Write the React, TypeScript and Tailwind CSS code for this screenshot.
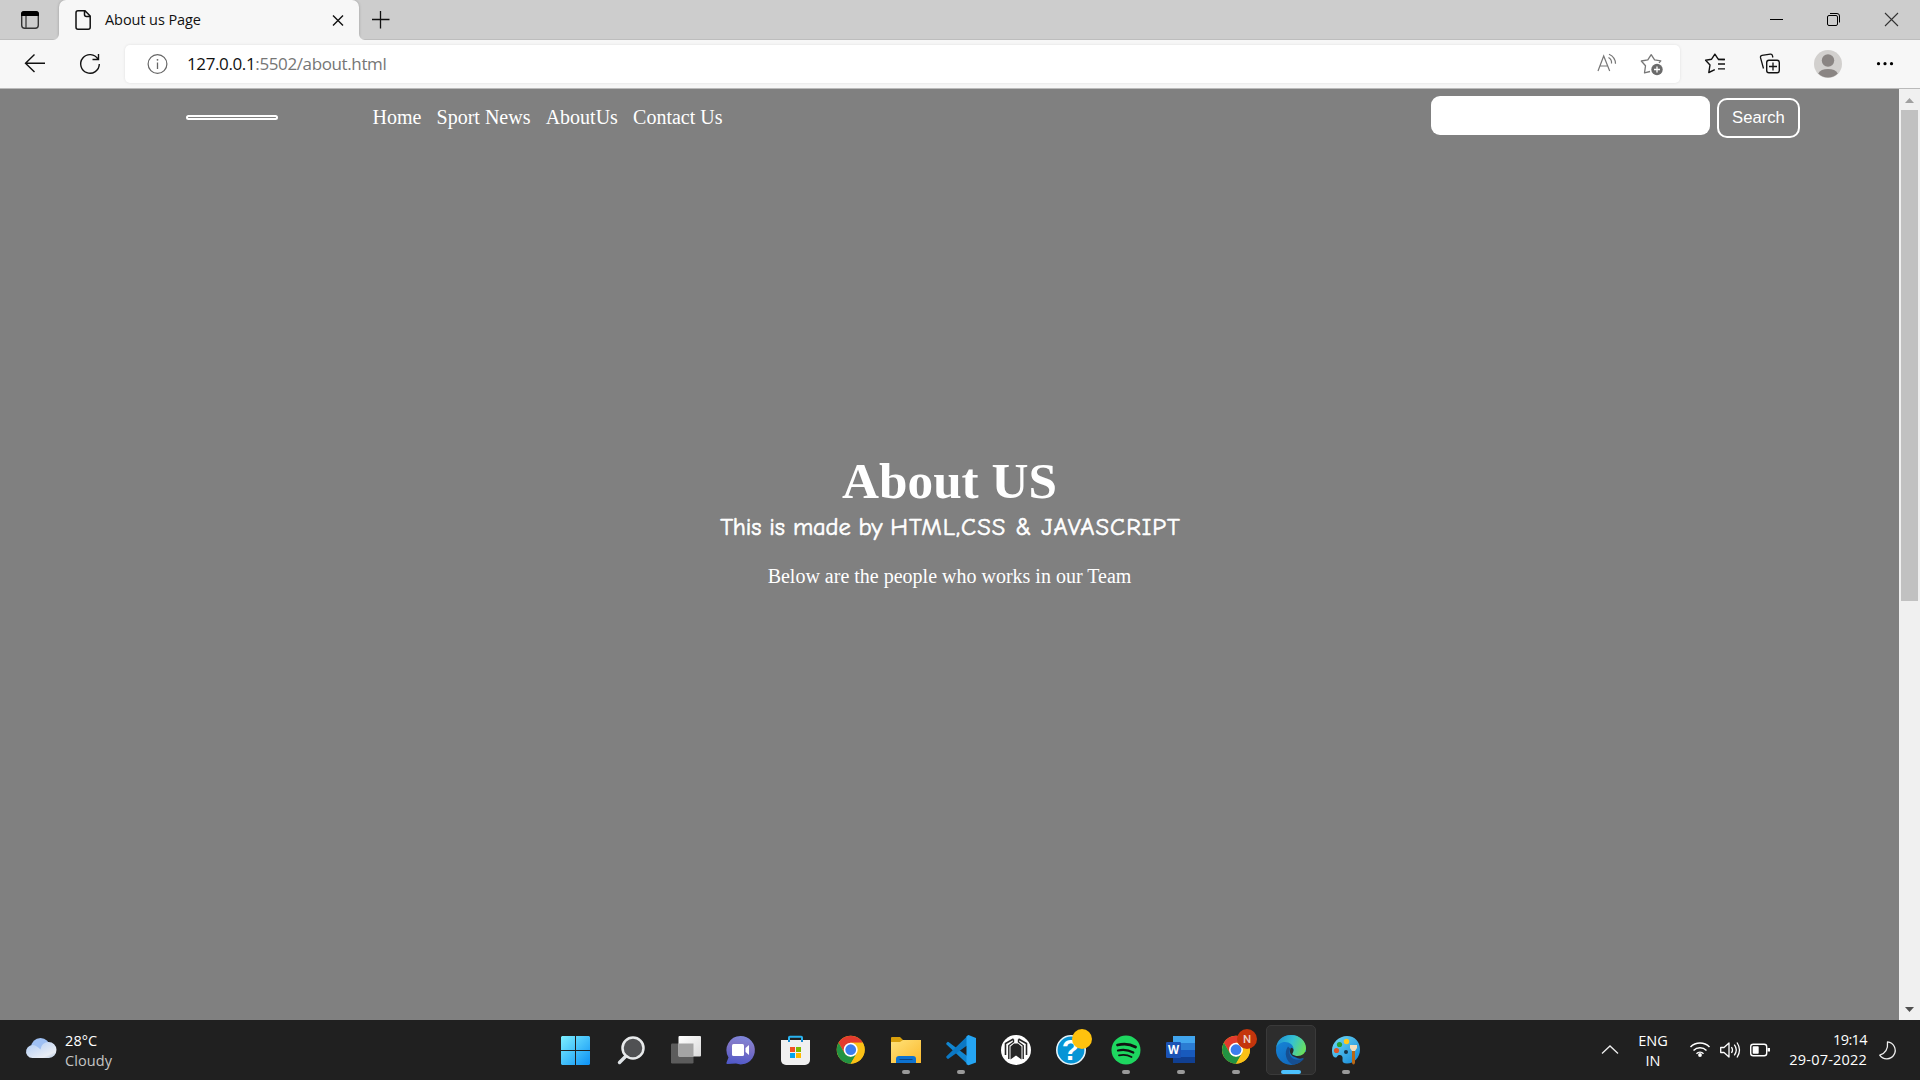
import type { ReactNode } from "react";

type IconProps = { box: string; className: string; children: ReactNode };

function Icon({ box, className, children }: IconProps) {
  return (
    <svg viewBox={box} className={`shrink-0 ${className}`} fill="none">
      {children}
    </svg>
  );
}

function TabStrip() {
  return (
    <div className="flex h-10 shrink-0 items-stretch border-b border-[#bdbdbd] bg-[#cdcdcd]">
      <Icon box="0 0 59 39" className="h-[39px] w-[59px]">
        <rect x="21.7" y="11.7" width="16.6" height="16.6" rx="3" stroke="#333" strokeWidth="1.4" />
        <path d="M21 16v-2a3 3 0 0 1 3-3h12a3 3 0 0 1 3 3v2z" fill="#000" />
        <path d="M26 16v12" stroke="#444" strokeWidth="1.4" />
      </Icon>
      <div className="relative flex h-10 w-[300px] shrink-0 items-center rounded-t-[7px] bg-[#f7f7f7] shadow-[0_0_3px_rgba(0,0,0,0.25)] [clip-path:inset(0_-8px_0_-8px)]">
        <svg viewBox="0 0 6 6" className="absolute bottom-0 -left-1.5 size-1.5"><path d="M6 0v6H0a6 6 0 0 0 6-6z" fill="#f7f7f7" /></svg>
        <svg viewBox="0 0 6 6" className="absolute -right-1.5 bottom-0 size-1.5"><path d="M0 0v6h6a6 6 0 0 1-6-6z" fill="#f7f7f7" /></svg>
        <Icon box="59 0 46 40" className="h-10 w-[46px]">
          <path d="M78 10.8h7l5.2 5.2v11.2a2 2 0 0 1-2 2H78a2 2 0 0 1-2-2V12.800a2 2 0 0 1 2-2zM84.500 11v3.500a2 2 0 0 0 2 2H90" stroke="#111" strokeWidth="1.5" />
        </Icon>
        <span className="w-[217px] text-[14.500px] tracking-[-0.08px] whitespace-nowrap text-[#111]">About us Page</span>
        <Icon box="322 0 32 40" className="h-10 w-8">
          <path d="M333 15.500l10 10M343 15.500l-10 10" stroke="#111" strokeWidth="1.4" />
        </Icon>
      </div>
      <Icon box="359 0 43 39" className="h-[39px] w-[43px]">
        <path d="M372 19.500h17.500M380.500 11v17.500" stroke="#111" strokeWidth="1.3" />
      </Icon>
      <Icon box="1740 0 180 39" className="ml-auto h-[39px] w-[180px]">
        <path d="M1770 19.500h13" stroke="#000" />
        <rect x="1827.500" y="15.500" width="10" height="10" rx="1.5" stroke="#000" />
        <path d="M1830 13.500h7a2.500 2.500 0 0 1 2.500 2.500v6.500" stroke="#000" />
        <path d="M1885 13l13 13M1898 13l-13 13" stroke="#333" strokeWidth="1.1" />
      </Icon>
    </div>
  );
}

function Toolbar() {
  return (
    <div className="flex h-[49px] shrink-0 items-center border-b border-[#bababa] bg-[#f7f7f7]">
      <Icon box="0 40 125 48" className="h-12 w-[125px]">
        <path d="M45 63.300H25.500M34.500 54.500l-9 8.800 9 8.800" stroke="#111" strokeWidth="1.4" />
        <path d="M98 59.200A9.300 9.300 0 1 0 99.300 64M98.500 54v5.500h-6" stroke="#111" strokeWidth="1.4" />
      </Icon>
      <div className="flex h-[38px] w-[1555px] shrink-0 items-center rounded-[5px] bg-white shadow-[0_0_3px_rgba(0,0,0,0.1)]">
        <Icon box="125 45 62 38" className="h-[38px] w-[62px]">
          <circle cx="157.500" cy="64" r="9.400" stroke="#666" strokeWidth="1.2" />
          <path d="M157.500 62.500v6.500" stroke="#666" strokeWidth="1.3" />
          <circle cx="157.500" cy="59.800" r="0.9" fill="#666" />
        </Icon>
        <span className="pb-px text-[17px] tracking-[-0.380px] whitespace-nowrap text-[#111]">
          127.0.0.1<span className="text-[#767676]">:5502/about.html</span>
        </span>
        <Icon box="1580 45 100 38" className="ml-auto h-[38px] w-[100px]">
          <path d="M1598 71l5.700-15 6 15M1600 66h7.800M1608.500 57.500a6 6 0 0 1 3 6M1609 54.300q6.500 3 6.500 9.500" stroke="#777" strokeWidth="1.2" />
          <path d="M1650 71.500l-5.500 1.300 1-7-4.200-4.800 6.500-1.100 3.400-5.200 3.400 5.200 6.200 1-1.800 2" stroke="#777" strokeWidth="1.3" strokeLinejoin="round" />
          <circle cx="1657" cy="69.500" r="5.700" fill="#6b6b6b" />
          <path d="M1654 69.500h6M1657 66.500v6" stroke="#fff" strokeWidth="1.3" />
        </Icon>
      </div>
      <Icon box="1680 40 240 48" className="h-12 w-60">
        <path d="M1724.500 59.500l-6.300-.300-3.300-5-3.300 5-6 1 4.400 4.800-1.200 7.500 6-2.800" stroke="#111" strokeWidth="1.4" strokeLinejoin="round" />
        <path d="M1718 59.500h7M1718 64h7M1718 68.800h7" stroke="#111" strokeWidth="1.3" />
        <path d="M1763.500 68.500l-3-10.800a2 2 0 0 1 1.500-2.300l8.300-1.200a2 2 0 0 1 2.200 1.600l.400 1.700" stroke="#111" strokeWidth="1.3" />
        <rect x="1766.700" y="60.200" width="12.600" height="12.600" rx="2.200" stroke="#111" strokeWidth="1.4" />
        <path d="M1769 66.500h8M1773 62.500v8" stroke="#111" strokeWidth="1.3" />
        <circle cx="1828" cy="64" r="14" fill="#d2d0ce" />
        <circle cx="1828" cy="60.500" r="6.200" fill="#8a8583" />
        <path d="M1818.200 73.500a10.500 7 0 0 1 19.600 0 14 14 0 0 1-19.600 0z" fill="#8a8583" />
        <g fill="#000"><circle cx="1878.500" cy="63.700" r="1.600" /><circle cx="1885" cy="63.700" r="1.600" /><circle cx="1891.500" cy="63.700" r="1.600" /></g>
      </Icon>
    </div>
  );
}

function PageContent() {
  return (
    <main className="flex flex-1 flex-col bg-[#808080] font-['Liberation_Serif','Times_New_Roman',serif] text-white">
      <nav className="flex h-[60px] shrink-0 items-start pl-[186px] text-xl">
        <div className="mt-[26px] h-[5px] w-[92px] rounded-[3px] border-2 border-white" />
        <ul className="mt-[14px] ml-[94.500px] flex gap-[15.200px] leading-7 whitespace-nowrap">
          <li>Home</li>
          <li>Sport News</li>
          <li>AboutUs</li>
          <li>Contact Us</li>
        </ul>
        <input aria-label="Search" className="mt-[7px] ml-auto h-[39px] w-[279px] rounded-[9px] bg-white" />
        <button className="mt-[9px] mr-[99px] ml-[7px] h-10 w-[83px] rounded-[10px] border-2 border-white font-['Liberation_Sans',Arial,sans-serif] text-[16.670px]">Search</button>
      </nav>
      <section className="flex flex-col items-center pt-[303px] whitespace-nowrap">
        <h1 className="text-[51.200px] leading-[58px] font-bold">About US</h1>
        <p className="pl-0.5 font-['Comic_Sans_MS','Comic_Neue',cursive] text-[24.500px] leading-[34px] tracking-[-0.130px] [-webkit-text-stroke:0.6px_white]">This is made by <span className="tracking-[1px]">HTML,CSS &amp; JAVASCRIPT</span></p>
        <p className="mt-[18px] text-xl leading-7">Below are the people who works in our Team</p>
      </section>
    </main>
  );
}

function Scrollbar() {
  return (
    <div className="flex w-[21px] shrink-0 flex-col bg-[#f0f0f0]">
      <Icon box="1899 89 21 21" className="h-[21px] w-[21px]"><path d="M1905 103l4.500-5 4.500 5z" fill="#a0a0a0" /></Icon>
      <div className="ml-0.5 h-[491px] w-[17px] bg-[#c1c1c1]" />
      <Icon box="1899 999 21 21" className="mt-auto h-[21px] w-[21px]"><path d="M1905 1007l4.500 5 4.500-5z" fill="#505050" /></Icon>
    </div>
  );
}

function ChromeLogo({ cx, cy }: { cx: number; cy: number }) {
  return (
    <g transform={`translate(${cx} ${cy})`}>
      <circle r="14" fill="#fbc116" />
      <path d="M-12.120-7A14 14 0 0 1 12.120-7L0-7-6.060 3.500z" fill="#e33b2e" />
      <path d="M-12.120-7A14 14 0 0 0 0 14L6.060 3.500 0 7-6.060 3.500z" fill="#229342" />
      <path d="M0-7H12.120A14 14 0 0 1 0 14L6.060 3.500z" fill="#fbc116" />
      <circle r="7" fill="#fff" />
      <circle r="5.400" fill="#3b7ded" />
    </g>
  );
}

const apps: { name: string; state?: "open" | "active"; art: ReactNode }[] = [
  { name: "Start", art: (
    <><defs><linearGradient id="start" x1="561" y1="1036" x2="590" y2="1065" gradientUnits="userSpaceOnUse"><stop stopColor="#7df0ff" /><stop offset="1" stopColor="#0c91f5" /></linearGradient></defs>
    <path d="M562 1036h13v14h-14v-13zM576 1036h13l1 1v13h-14zM561 1051h14v14h-13l-1-1zM576 1051h14v13l-1 1h-13z" fill="url(#start)" /></>
  ) },
  { name: "Search", art: (
    <><path d="M626 1056l-6.500 6.500" stroke="#dfe3e6" strokeWidth="3.400" strokeLinecap="round" /><circle cx="633" cy="1048" r="10.500" fill="#505153" stroke="#e8eaeb" strokeWidth="2.500" /></>
  ) },
  { name: "Task view", art: (
    <><defs><linearGradient id="tv" x1="0" y1="0" x2="1" y2="1"><stop stopColor="#fff" /><stop offset="1" stopColor="#dadada" /></linearGradient></defs>
    <rect x="671" y="1043.500" width="22.500" height="20" rx="1.200" fill="#5c5c5c" /><rect x="678.500" y="1036" width="22.500" height="20.500" rx="1" fill="url(#tv)" /><path d="M678.500 1043.500h15v13h-15z" fill="#a4a4a4" /></>
  ) },
  { name: "Chat", art: (
    <><defs><linearGradient id="chat" x1="0.600" y1="0" x2="0.400" y2="1"><stop stopColor="#7e87dc" /><stop offset="0.350" stopColor="#8075c6" /><stop offset="1" stopColor="#5059c9" /></linearGradient></defs>
    <path d="M740.500 1036a14.200 14.200 0 1 1-4.500 27.600l-8.500.400q-1.500 0-1-1.500l2-5a14.200 14.200 0 0 1 12-21.500z" fill="url(#chat)" /><rect x="732" y="1044" width="12" height="12" rx="1.500" fill="#fff" /><path d="M745.500 1048l3.500-3v10l-3.500-3z" fill="#fff" /></>
  ) },
  { name: "Store", art: (
    <><path d="M789 1042v-4.500q0-.8.800-.8h11.400q.8 0 .8.800v4.500" stroke="#28b3f0" strokeWidth="2" /><path d="M781 1040h29v20a5 5 0 0 1-5 5h-19a5 5 0 0 1-5-5z" fill="#f0f0f0" /><path d="M789 1040v2M802 1040v2" stroke="#178ad0" strokeWidth="2" />
    <path d="M790 1047h5v5h-5z" fill="#f25022" /><path d="M796 1047h5v5h-5z" fill="#7fba00" /><path d="M790 1053h5v5h-5z" fill="#00a4ef" /><path d="M796 1053h5v5h-5z" fill="#ffb900" /></>
  ) },
  { name: "Chrome", art: <ChromeLogo cx={850.700} cy={1049.700} /> },
  { name: "Explorer", state: "open", art: (
    <><defs><linearGradient id="folder" x1="0" y1="0" x2="1" y2="1"><stop stopColor="#ffe27a" /><stop offset="1" stopColor="#fbb92c" /></linearGradient></defs>
    <path d="M891 1038q0-1 1-1h8l3 3v5h-12z" fill="#d9a00c" /><path d="M891 1042h9l3-2h18v23h-30z" fill="url(#folder)" /><path d="M896 1063v-4a3 3 0 0 1 3-3h14a3 3 0 0 1 3 3v4z" fill="#0d72d0" /><path d="M899.500 1059.500h13" stroke="#0a4585" /></>
  ) },
  { name: "VS Code", state: "open", art: (
    <><path d="M948.500 1042l20 15v8l-22-20.500q-.7-.8 0-1.600l1-1q.5-.4 1 .1z" fill="#1186d0" /><path d="M968.500 1035v9.500l-20 14.300q-.5.400-1 0l-1-1q-.7-.8 0-1.500z" fill="#0b78c4" /><path d="M968.500 1035l7.500 3v24.500l-7.500 2.700-2-1v-28z" fill="#25a5f3" /></>
  ) },
  { name: "Headset", art: (
    <><circle cx="1016" cy="1050" r="15" fill="#fff" />
    <path d="M1005.500 1055v-11.500l8-4.500M1026.500 1055v-11.500l-8-4.500" stroke="#252525" strokeWidth="1.600" />
    <path d="M1008.800 1059v-13.500l4.700-3.500v-2.500M1023.200 1059v-13.500l-4.700-3.500v-2.500" stroke="#252525" strokeWidth="1.400" />
    <path d="M1010.500 1059.500v-13l3.500-3h4l3.500 3v13l-5.500-4z" fill="#252525" /></>
  ) },
  { name: "Help", art: (
    <><circle cx="1071" cy="1050" r="14.200" fill="#0795d6" stroke="#e7f4fa" strokeWidth="1.600" /><text x="1070.500" y="1059.700" textAnchor="middle" fontFamily="Liberation Sans" fontWeight="700" fontSize="29" fill="#fff">?</text><circle cx="1082" cy="1039" r="10" fill="#ffc20e" /></>
  ) },
  { name: "Spotify", state: "open", art: (
    <><circle cx="1126" cy="1050" r="14.500" fill="#1ed760" /><path d="M1117.500 1045q10-2.500 18 2" stroke="#111" strokeWidth="2.800" strokeLinecap="round" /><path d="M1118 1050.500q8-2 15.300 2" stroke="#111" strokeWidth="2.200" strokeLinecap="round" /><path d="M1119 1055.300q7-1.500 12.500 1.700" stroke="#111" strokeWidth="1.800" strokeLinecap="round" /></>
  ) },
  { name: "Word", state: "open", art: (
    <><path d="M1173 1036h22v7h-22z" fill="#41a5ee" /><path d="M1173 1043h22v7h-22z" fill="#2b7cd3" /><path d="M1173 1050h22v7h-22z" fill="#185abd" /><path d="M1173 1057h22v6h-22z" fill="#103f91" /><rect x="1166" y="1042" width="15" height="16" rx="1.200" fill="#1b53b5" /><text x="1173.500" y="1054.200" textAnchor="middle" fontFamily="Open Sans" fontWeight="700" fontSize="11.500" fill="#fff">W</text></>
  ) },
  { name: "Chrome profile", state: "open", art: (
    <><ChromeLogo cx={1236} cy={1049.700} /><circle cx="1247" cy="1039" r="10" fill="#c4350c" /><text x="1247" y="1043.300" textAnchor="middle" fontFamily="Roboto" fontWeight="500" fontSize="11.500" fill="#ead0c6">N</text></>
  ) },
  { name: "Edge", state: "active", art: (
    <><defs><linearGradient id="edgeTop" x1="0" y1="0.300" x2="1" y2="0.600"><stop stopColor="#1f93d5" /><stop offset="0.500" stopColor="#35c1d2" /><stop offset="1" stopColor="#6be15a" /></linearGradient><linearGradient id="edgeLow" x1="0" y1="0" x2="0.700" y2="1"><stop stopColor="#1689dc" /><stop offset="1" stopColor="#1166ba" /></linearGradient></defs>
    <circle cx="1291" cy="1050" r="15" fill="url(#edgeLow)" />
    <path d="M1293 1052h16v3.500l-5.500 2.500q-8 3-10.500-6z" fill="#2d2d2d" />
    <path d="M1276 1048C1277 1040 1283 1035 1291 1035c9 0 15 6.500 15 13 0 5-4 8-8.500 8-3.500 0-6-1.500-6-2.500 0-.8 2-1.500 2-4.500 0-4-4-7-8.500-7-4 0-7.500 2.500-9 6z" fill="url(#edgeTop)" /><path d="M1288 1046.500c-4.500 6-2 15.500 5 18.300 4.500-.5 9-3 11-6.300-5 2.500-12 1.500-14-3.500-1-2.500-.5-4.500.5-6z" fill="#164f91" /><path d="M1291 1047.800c-2 3-1 7 2.500 8.800 4 1.700 7.500 1.300 9.500.2-3 .2-8-.2-10.500-2.300-.8-.8 1-1.500 1-4.500 0-1-.8-2-2.500-2.200z" fill="#292929" /></>
  ) },
  { name: "Paint", state: "open", art: (
    <><defs><linearGradient id="paint" x1="0" y1="0" x2="1" y2="1"><stop stopColor="#70dbf7" /><stop offset="1" stopColor="#1184d6" /></linearGradient></defs>
    <path d="M1347 1036c8 0 13 6 13 13.500 0 8-6 14-13 14-3.500 0-5-1.500-4.500-4 .5-2.500-.5-4.500-3-4.500s-2 3-4.500 2.500c-2-.5-3-3.500-3-7 0-8 7-14.500 15-14.500z" fill="url(#paint)" /><circle cx="1346.500" cy="1041.500" r="2.700" fill="#ffc91a" /><circle cx="1339.500" cy="1044.500" r="2.600" fill="#24a136" /><circle cx="1336.500" cy="1050.500" r="2.600" fill="#dc5528" /><circle cx="1346" cy="1052" r="2" fill="#173449" /><path d="M1350 1045h7v3l-2 3h-3l-2-3z" fill="#f3dfbd" /><path d="M1352 1051h3v12q-1.500 3-3 0z" fill="#b96716" /></>
  ) },
];

function TaskbarApp({ index, name, state, art }: { index: number; name: string; state?: "open" | "active"; art: ReactNode }) {
  return (
    <div aria-label={name} className="grid h-[60px] w-[55px] shrink-0 place-items-center">
      {state === "active" && <div className="col-start-1 row-start-1 size-[50px] rounded-[5px] border border-[#3a3a3a] bg-[#2d2d2d]" />}
      <svg viewBox={`${548 + index * 55} 1020 55 60`} className="col-start-1 row-start-1 h-[60px] w-[55px]" fill="none">{art}</svg>
      {state === "open" && <div className="col-start-1 row-start-1 mb-1.5 h-1 w-2 self-end rounded-full bg-[#9a9a9a]" />}
      {state === "active" && <div className="col-start-1 row-start-1 mb-1.5 h-1 w-5 self-end rounded-full bg-[#4cc2ff]" />}
    </div>
  );
}

function Taskbar() {
  return (
    <footer className="flex h-[60px] shrink-0 items-center bg-[#202020] text-[14.500px] leading-5 whitespace-nowrap text-white">
      <div className="flex w-[548px] shrink-0 items-center">
        <Icon box="0 1020 65 60" className="h-[60px] w-[65px]">
          <defs><linearGradient id="cloud" x1="0" y1="0" x2="0.900" y2="1"><stop stopColor="#aecbf5" /><stop offset="0.800" stopColor="#e9edf4" /><stop offset="1" stopColor="#b7c9df" /></linearGradient></defs>
          <circle cx="40.500" cy="1047.500" r="9.500" fill="#9fc0f3" />
          <path d="M32.500 1058a6.500 6.500 0 1 1 3.500-12q3 1.500 4.500 3.500a8 8 0 1 1 8.500 8.500z" fill="url(#cloud)" />
        </Icon>
        <div className="pt-0.5 tracking-[0.1px]">
          <div>28°C</div>
          <div className="text-[#c5c5c5]">Cloudy</div>
        </div>
      </div>
      {apps.map((app, index) => <TaskbarApp key={app.name} index={index} {...app} />)}
      <Icon box="1595 1020 35 60" className="ml-auto h-[60px] w-[35px]"><path d="M1602 1053.500l8-7.500 8 7.500" stroke="#eee" strokeWidth="1.300" /></Icon>
      <div className="w-[46px] pt-0.5 text-center"><div>ENG</div><div>IN</div></div>
      <Icon box="1676 1020 104 60" className="h-[60px] w-[104px]">
        <path d="M1690.500 1047a13.500 13.500 0 0 1 19 0M1693.500 1050.500a9.300 9.300 0 0 1 13 0M1696.500 1053.700a5 5 0 0 1 7 0" stroke="#fff" strokeWidth="1.500" /><circle cx="1700" cy="1055" r="1.900" fill="#fff" />
        <path d="M1720.700 1047.500h3.300l5-4.500v14l-5-4.500h-3.300zM1731.500 1047q2 3 0 6M1734.300 1044.700q4 5.300 0 10.600M1737 1042.500q5 7.500 0 15" stroke="#fff" strokeWidth="1.300" strokeLinejoin="round" />
        <rect x="1750.700" y="1044.200" width="16" height="11.600" rx="2.500" stroke="#fff" strokeWidth="1.400" /><rect x="1752.700" y="1046.200" width="6" height="7.600" rx="0.800" fill="#fff" /><path d="M1767.500 1048h2.500v3.500h-2.500z" fill="#fff" />
      </Icon>
      <div className="w-[87px] text-right"><div className="tracking-[-0.6px]">19:14</div><div className="tracking-[0.2px]">29-07-2022</div></div>
      <Icon box="1867 1020 53 60" className="h-[60px] w-[53px]"><path d="M1887.500 1041.900a8.500 8.500 0 1 1-7.800 13.300q8.800-2.700 7.800-13.300z" stroke="#eee" strokeWidth="1.300" strokeLinejoin="round" /></Icon>
    </footer>
  );
}

export default function App() {
  return (
    <div className="flex h-[1080px] w-[1920px] flex-col overflow-hidden font-['Segoe_UI','Open_Sans',sans-serif]">
      <TabStrip />
      <Toolbar />
      <div className="flex min-h-0 flex-1">
        <PageContent />
        <Scrollbar />
      </div>
      <Taskbar />
    </div>
  );
}
